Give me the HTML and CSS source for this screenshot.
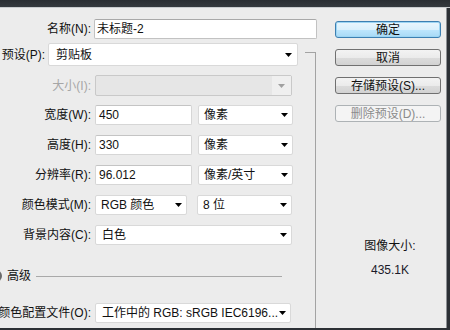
FILE: index.html
```html
<!DOCTYPE html>
<html lang="zh-CN">
<head>
<meta charset="utf-8">
<title>新建</title>
<link rel="stylesheet" href="styles.css">
</head>
<body>
<div class="window">
  <div class="titlebar"></div>
  <div class="middle">
    <div class="content">
      <div class="form">
        <div class="row row-name">
          <span class="label">名称(N):</span>
          <div class="field input name">未标题-2</div>
        </div>
        <div class="group">
          <div class="row row-preset">
            <span class="label">预设(P):</span>
            <div class="field select preset"><span class="val">剪贴板</span><svg class="arrow" width="7" height="4" viewBox="0 0 7 4"><path d="M0 0H7L3.5 4Z"/></svg></div>
          </div>
          <div class="row row-size">
            <span class="label disabled">大小(I):</span>
            <div class="field select size disabled"><span class="val"></span><span class="arrowbox"><svg class="arrow grey" width="7" height="4" viewBox="0 0 7 4"><path d="M0 0H7L3.5 4Z"/></svg></span></div>
          </div>
          <div class="row">
            <span class="label">宽度(W):</span>
            <div class="field input num">450</div>
            <div class="field select unit"><span class="val">像素</span><svg class="arrow" width="7" height="4" viewBox="0 0 7 4"><path d="M0 0H7L3.5 4Z"/></svg></div>
          </div>
          <div class="row">
            <span class="label">高度(H):</span>
            <div class="field input num">330</div>
            <div class="field select unit"><span class="val">像素</span><svg class="arrow" width="7" height="4" viewBox="0 0 7 4"><path d="M0 0H7L3.5 4Z"/></svg></div>
          </div>
          <div class="row">
            <span class="label">分辨率(R):</span>
            <div class="field input num">96.012</div>
            <div class="field select unit"><span class="val">像素/英寸</span><svg class="arrow" width="7" height="4" viewBox="0 0 7 4"><path d="M0 0H7L3.5 4Z"/></svg></div>
          </div>
          <div class="row">
            <span class="label">颜色模式(M):</span>
            <div class="field select mode"><span class="val">RGB 颜色</span><svg class="arrow" width="7" height="4" viewBox="0 0 7 4"><path d="M0 0H7L3.5 4Z"/></svg></div>
            <div class="field select unit"><span class="val">8 位</span><svg class="arrow" width="7" height="4" viewBox="0 0 7 4"><path d="M0 0H7L3.5 4Z"/></svg></div>
          </div>
          <div class="row">
            <span class="label">背景内容(C):</span>
            <div class="field select wide"><span class="val">白色</span><svg class="arrow" width="7" height="4" viewBox="0 0 7 4"><path d="M0 0H7L3.5 4Z"/></svg></div>
          </div>
          <div class="advanced">
            <span class="disc"></span>
            <span class="adv-text">高级</span>
            <span class="rule"></span>
          </div>
          <div class="row row-profile">
            <span class="label">颜色配置文件(O):</span>
            <div class="field select wide"><span class="val">工作中的 RGB: sRGB IEC6196...</span><svg class="arrow" width="7" height="4" viewBox="0 0 7 4"><path d="M0 0H7L3.5 4Z"/></svg></div>
          </div>
        </div>
      </div>
      <div class="side">
        <button class="btn default">确定</button>
        <button class="btn">取消</button>
        <button class="btn">存储预设(S)...</button>
        <button class="btn disabled">删除预设(D)...</button>
        <div class="imgsize">
          <div class="imgsize-label">图像大小:</div>
          <div class="imgsize-value">435.1K</div>
        </div>
      </div>
    </div>
    <div class="frame-right"></div>
  </div>
  <div class="frame-bottom"></div>
</div>
</body>
</html>
```

FILE: styles.css
```css
* { box-sizing: border-box; }
html, body { margin: 0; padding: 0; }
body {
  width: 450px;
  height: 330px;
  overflow: hidden;
  font-family: "Liberation Sans", "Noto Sans CJK SC", sans-serif;
  font-size: 12px;
  color: #111;
}
.window {
  width: 450px;
  height: 330px;
  display: flex;
  flex-direction: column;
  background: #ececec;
  overflow: hidden;
}
.titlebar {
  height: 8px;
  flex: none;
  background: linear-gradient(#2a2e33, #34393e);
  border-bottom: 1px solid #c9cccf;
}
.middle {
  flex: 1;
  display: flex;
  min-height: 0;
}
.content {
  flex: 1;
  display: flex;
  min-width: 0;
}
.frame-right {
  width: 4px;
  flex: none;
  background: #2c3035;
  border-left: 1px solid #8d9094;
}
.frame-bottom {
  height: 2px;
  flex: none;
  background: #2c3035;
}

/* form */
.form {
  width: 318px;
  flex: none;
  display: flex;
  flex-direction: column;
  padding-top: 11px;
}
.row {
  display: flex;
  align-items: center;
  height: 20px;
  margin-top: 10px;
}
.row-name { margin-top: 0; }
.label {
  width: 91px;
  flex: none;
  display: flex;
  justify-content: flex-end;
  white-space: nowrap;
  margin-right: 4px;
  line-height: 14px;
  color: #111;
}
.label.disabled { color: #a6a6a6; }
.row-name .label { margin-right: 3px; }

.group {
  position: relative;
  width: 316px;
  flex: 1;
  margin-top: 4px;
}
.group::after {
  content: "";
  position: absolute;
  top: 9px;
  right: 0;
  bottom: 0;
  width: 10px;
  border-top: 1px solid #a3a3a3;
  border-right: 1px solid #a3a3a3;
}
.group .row:first-child { margin-top: 0; }

.field {
  height: 100%;
  background: #fff;
  display: flex;
  align-items: center;
  white-space: nowrap;
  line-height: 14px;
}
.input {
  border: 1px solid #d6d6d6;
  border-top-color: #c4c4c4;
  border-radius: 2px;
  padding-left: 3px;
}
.input.name {
  width: 223px;
  border-color: #c2c2c2;
  border-top-color: #a9a9a9;
  padding-left: 2px;
}
.input.num { width: 97px; }
.select {
  border: 1px solid #d9d9d9;
  border-radius: 2px;
  padding-left: 5px;
  padding-right: 4px;
  justify-content: space-between;
}
.arrow { fill: #000; flex: none; }
.arrow.grey { fill: #a0a0a0; }

.row-preset { height: 23px; }
.row-preset .label { width: 45px; margin-right: 3px; }
.select.preset { width: 250px; padding-left: 7px; padding-right: 5px; }

.row-size { height: 21px; margin-top: 9px; }
.row-size + .row { margin-top: 9px; }
.select.size {
  width: 197px;
  padding: 0;
  background: #e6e6e6;
  border-color: #c9c9c9;
}
.arrowbox {
  width: 19px;
  height: 100%;
  background: #efefef;
  display: flex;
  align-items: center;
  justify-content: center;
}

.unit { width: 95px; margin-left: 6px; }
.select.mode { width: 92px; padding-left: 5px; }
.select.mode + .unit { margin-left: 10px; }
.select.wide { width: 197px; padding-left: 6px; }

.advanced {
  display: flex;
  align-items: center;
  height: 14px;
  margin-top: 24px;
}
.disc {
  width: 12px;
  height: 12px;
  flex: none;
  margin-left: -10px;
  border-radius: 50%;
  background: #6a6a6a;
}
.adv-text {
  margin-left: 5px;
  line-height: 14px;
}
.rule {
  margin-left: 5px;
  width: 246px;
  height: 1px;
  background: #a9a9a9;
}
.row-profile { margin-top: 20px; }
.row-profile .select.wide { width: 196px; }

/* side */
.side {
  width: 106px;
  flex: none;
  margin-left: 17px;
  padding-top: 13px;
  display: flex;
  flex-direction: column;
}
.btn {
  height: 17px;
  width: 106px;
  margin: 0 0 10px 0;
  padding: 0;
  border: 1px solid #707070;
  border-radius: 3px;
  background: linear-gradient(#f3f3f3 0%, #ebebeb 50%, #dcdcdc 51%, #d2d2d2 100%);
  font: inherit;
  line-height: 14px;
  color: #111;
  text-align: center;
}
.btn + .btn { margin-top: 1px; }
.btn.default {
  border-color: #3c7fb1;
  background: linear-gradient(#eaf6fd 0%, #d9f0fc 50%, #bee6fd 51%, #a7d9f5 100%);
  box-shadow: inset 0 0 0 1px #9dd5f3;
}
.btn.disabled {
  border-color: #adb2b5;
  background: #f4f4f4;
  color: #8b8b8b;
}
.imgsize {
  margin-top: 106px;
  text-align: center;
  padding-left: 4px;
}
.imgsize-label { line-height: 16px; }
.imgsize-value { line-height: 16px; margin-top: 8px; color: #1a1a2a; }
```
